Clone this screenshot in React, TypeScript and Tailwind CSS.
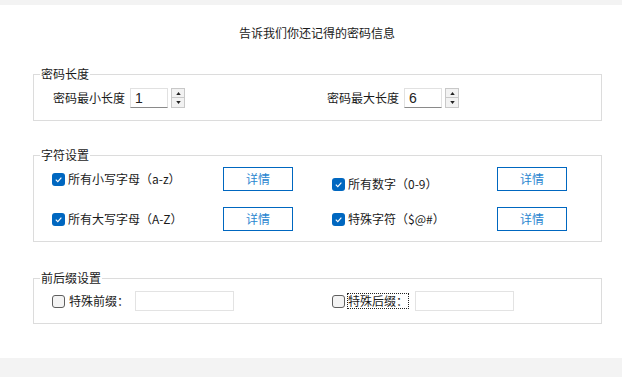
import React from 'react';

const cjk = "font-['Noto_Sans_CJK_SC',sans-serif]";

const CheckBox = ({ checked }: { checked: boolean }) =>
  checked ? (
    <span className="flex h-[13px] w-[13px] shrink-0 items-center justify-center rounded-[3px] bg-[#0067c0]">
      <svg viewBox="0 0 10 10" className="h-[9px] w-[9px]" fill="none" stroke="white" strokeWidth="1.3">
        <path d="M2 5.2 L4.2 7.3 L8.2 3" />
      </svg>
    </span>
  ) : (
    <span className="h-[13px] w-[13px] shrink-0 rounded-[3px] border border-[#5f5f5f] bg-[#f4f4f4]" />
  );

const Spinner = () => (
  <div className="ml-[3px] flex h-[20px] w-[14px] flex-col">
    <span className="flex h-[10px] items-center justify-center border border-[#c8c8c8] bg-[#f2f2f2]">
      <svg viewBox="0 0 6 4" className="h-[3px] w-[5px]">
        <path d="M0 4 L3 0 L6 4 Z" fill="#222" />
      </svg>
    </span>
    <span className="flex h-[10px] items-center justify-center border border-t-0 border-[#c8c8c8] bg-[#f2f2f2]">
      <svg viewBox="0 0 6 4" className="h-[3px] w-[5px]">
        <path d="M0 0 L6 0 L3 4 Z" fill="#222" />
      </svg>
    </span>
  </div>
);

const NumberField = ({ label, value }: { label: string; value: string }) => (
  <div className="flex items-center">
    <span className="w-[72px] text-[12px] leading-[16px]">{label}</span>
    <div className="ml-[5px] flex h-[20px] w-[38px] items-center border border-[#e1e1e1] border-b-[#8a8a8a] bg-white px-[4px] font-['Liberation_Sans',sans-serif] text-[14px] leading-[18px] text-[#222]">
      {value}
    </div>
    <Spinner />
  </div>
);

const DetailButton = () => (
  <button className="h-[24px] w-[70px] shrink-0 border border-[#0067c0] bg-white text-[12px] leading-[16px] text-[#2a86d0]">
    详情
  </button>
);

const CharOption = ({ label }: { label: string }) => (
  <div className="flex items-center">
    <CheckBox checked />
    <span className="ml-[3px] text-[12px] leading-[16px]">{label}</span>
  </div>
);

const Legend = ({ children }: { children: React.ReactNode }) => (
  <legend className="ml-[6px] px-[1px] text-[12px] leading-[16px]">{children}</legend>
);

export default function App() {
  return (
    <div className={`flex h-[377px] w-[622px] flex-col bg-white text-[#1a1a1a] ${cjk}`}>
      <div className="h-[5px] bg-[#f3f3f3]" />

      <div className="mt-[20px] h-[16px] pl-[12px] text-center text-[12px] leading-[16px]">
        告诉我们你还记得的密码信息
      </div>

      {/* 密码长度 */}
      <fieldset className="ml-[33px] mt-[25px] w-[569px] border border-[#dcdcdc]">
        <Legend>密码长度</Legend>
        <div className="flex items-center pb-[12px] pl-[19px] pt-[6px]">
          <div className="w-[274px]">
            <NumberField label="密码最小长度" value="1" />
          </div>
          <NumberField label="密码最大长度" value="6" />
        </div>
      </fieldset>

      {/* 字符设置 */}
      <fieldset className="ml-[33px] mt-[26px] w-[569px] border border-[#dcdcdc]">
        <Legend>字符设置</Legend>
        <div className="flex flex-col gap-[15px] pb-[10px] pl-[18px] pt-[3px]">
          <div className="flex items-center">
            <div className="w-[171px]">
              <CharOption label="所有小写字母（a-z）" />
            </div>
            <DetailButton />
            <div className="ml-[39px] w-[165px] pt-[10px]">
              <CharOption label="所有数字（0-9）" />
            </div>
            <DetailButton />
          </div>
          <div className="flex items-center">
            <div className="w-[171px]">
              <CharOption label="所有大写字母（A-Z）" />
            </div>
            <DetailButton />
            <div className="ml-[39px] w-[165px]">
              <CharOption label="特殊字符（$@#）" />
            </div>
            <DetailButton />
          </div>
        </div>
      </fieldset>

      {/* 前后缀设置 */}
      <fieldset className="ml-[33px] mt-[28px] w-[569px] border border-[#dcdcdc]">
        <Legend>前后缀设置</Legend>
        <div className="flex items-center pb-[12px] pl-[18px] pt-[5px]">
          <div className="flex w-[280px] items-center">
            <CheckBox checked={false} />
            <span className="ml-[4px] w-[60px] text-[12px] leading-[16px]">特殊前缀：</span>
            <div className="ml-[6px] h-[20px] w-[99px] border border-[#e3e3e3] bg-white" />
          </div>
          <div className="flex items-center">
            <CheckBox checked={false} />
            <span className="ml-[2px] border border-dotted border-[#222] text-[12px] leading-[14px]">特殊后缀：</span>
            <div className="ml-[6px] h-[20px] w-[99px] border border-[#e3e3e3] bg-white" />
          </div>
        </div>
      </fieldset>

      <div className="flex-1" />
      <div className="h-[19px] bg-[#f3f3f3]" />
    </div>
  );
}
